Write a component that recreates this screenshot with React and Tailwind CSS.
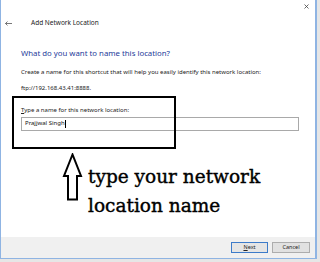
import React from "react";

const ui = { fontFamily: '"Noto Sans", "Open Sans", sans-serif' };
const slab = { fontFamily: '"DejaVu Serif", serif' };

const App = () => {
  return (
    <div className="w-[320px] h-[262px] bg-[#e6e6e6] overflow-hidden" style={ui}>
      {/* Dialog window */}
      <div className="w-[317px] h-[259px] border-l border-r-2 border-b border-[#8fb4e3] bg-white flex flex-col">
        <div className="relative flex-1 flex flex-col">
          {/* close */}
          <div className="flex justify-end pr-[6px] pt-[4px] h-[10px]">
            <svg width="5" height="5" viewBox="0 0 5 5">
              <path d="M0.5 0.5 L4.5 4.5 M4.5 0.5 L0.5 4.5" stroke="#444" strokeWidth="0.8" />
            </svg>
          </div>

          {/* title row */}
          <div className="flex items-center mt-[9px] h-[8px]">
            <svg width="7" height="5" viewBox="0 0 7 5" className="ml-[4px]">
              <path d="M0.5 2.5 H7 M2.5 0.5 L0.5 2.5 L2.5 4.5" stroke="#555" strokeWidth="0.8" fill="none" />
            </svg>
            <span className="ml-[19px] text-[6.5px] leading-[8px] text-[#222]">Add Network Location</span>
          </div>

          <div className="pl-[20px] flex flex-col">
            <h1 className="mt-[21px] text-[7.8px] leading-[11px] text-[#1e3b9a]">
              What do you want to name this location?
            </h1>
            <p className="mt-[10px] text-[6px] leading-[7px] text-[#222]">
              Create a name for this shortcut that will help you easily identify this network location:
            </p>
            <p className="mt-[9px] text-[6px] leading-[7px] text-[#222]">ftp://192.168.43.41:8888.</p>

            <label className="mt-[15px] text-[6px] leading-[7px] text-[#222]">
              <span className="underline">T</span>ype a name for this network location:
            </label>
            <div className="mt-[2.5px] w-[278px] h-[14px] border border-[#a9a9a9] flex items-center pl-[3px] text-[6px] text-[#111]">
              Prajjwal Singh<span className="w-px h-[8px] bg-black"></span>
            </div>

            {/* annotation */}
            <div className="mt-[22px] flex items-start ml-[41px]">
              <svg width="21" height="48" viewBox="0 0 21 48">
                <path d="M10.5 1.5 L2 23 L6 23 L6 46.5 L15 46.5 L15 23 L19 23 Z" fill="white" stroke="black" strokeWidth="2" strokeLinejoin="miter" />
              </svg>
              <div
                className="ml-[5px] mt-[9px] text-[18.5px] leading-[29px] text-black [-webkit-text-stroke:0.4px_black]"
                style={slab}
              >
                <div>type your network</div>
                <div>location name</div>
              </div>
            </div>
          </div>

          {/* highlight box over the field */}
          <div className="absolute left-[11px] top-[96px] w-[164px] h-[53px] border-2 border-black"></div>
        </div>

        {/* footer */}
        <div className="h-[21px] bg-[#f0f0f0] flex justify-end items-center gap-[4px] pr-[5px]">
          <button className="w-[37px] h-[11px] border border-[#3d7bc9] bg-[#e5e5e5] text-[5.5px] leading-[9px] text-[#222]">
            <span className="underline">N</span>ext
          </button>
          <button className="w-[38px] h-[11px] border border-[#adadad] bg-[#e1e1e1] text-[5.5px] leading-[9px] text-[#222]">
            Cancel
          </button>
        </div>
      </div>
    </div>
  );
};

export default App;
